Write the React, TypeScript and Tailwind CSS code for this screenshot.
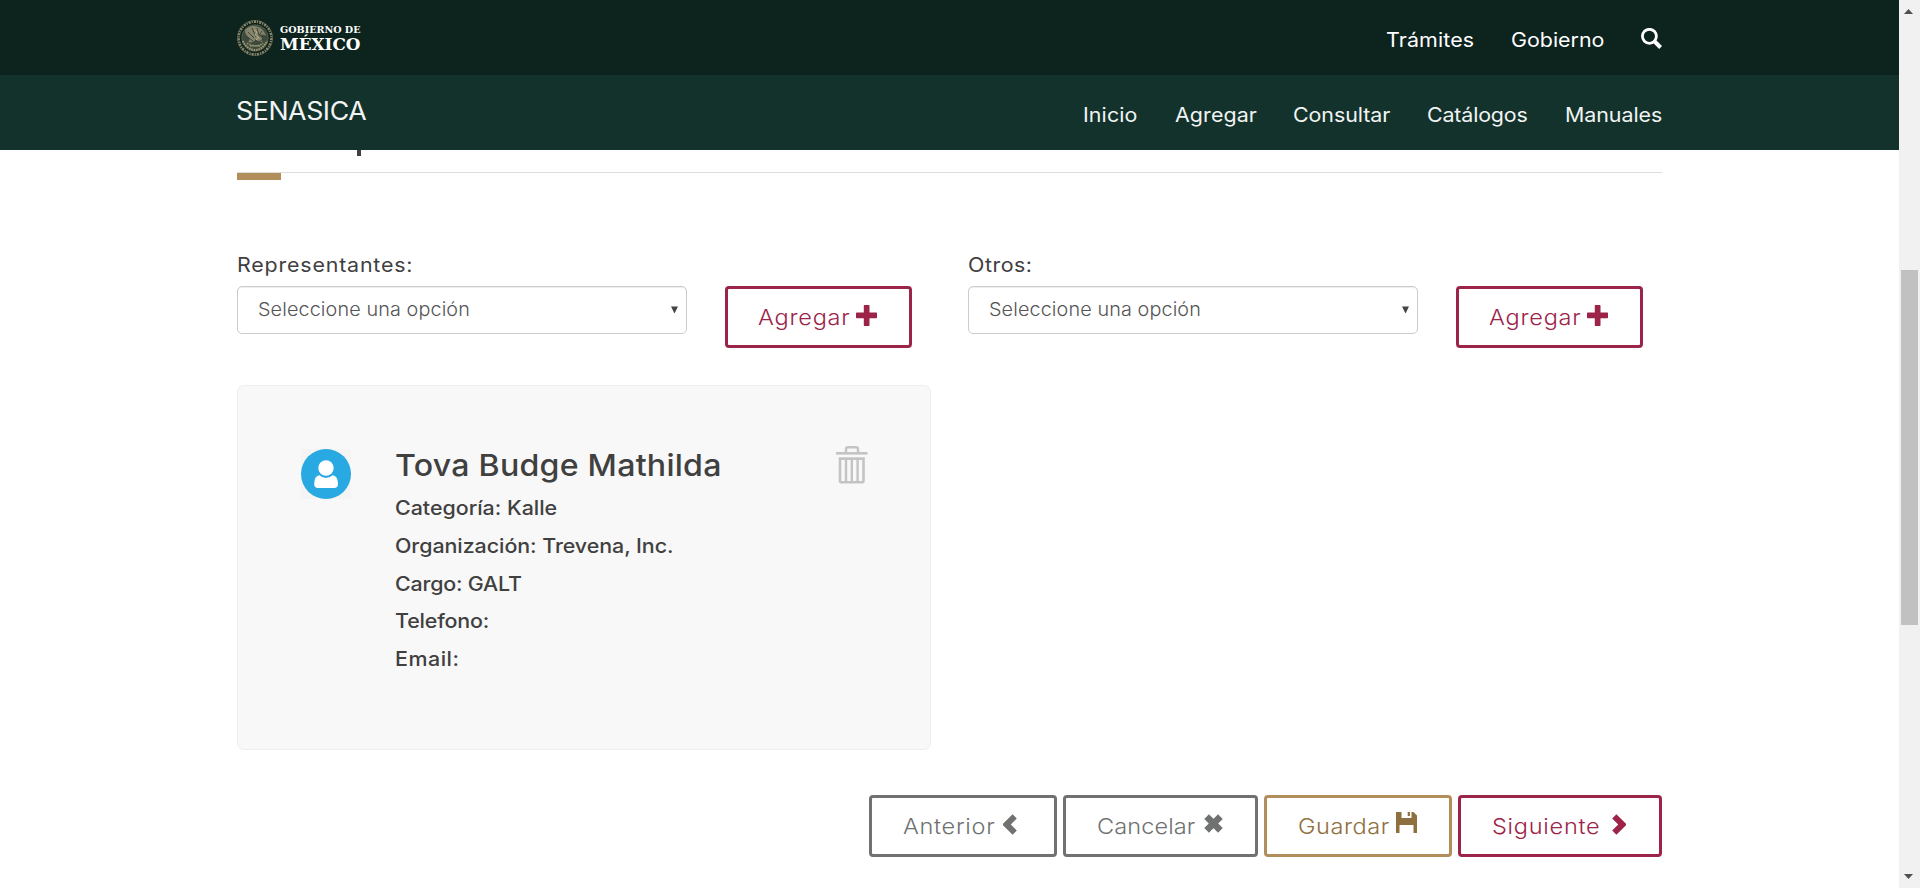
import type { ReactNode } from 'react';

function Emblem() {
  return (
    <svg width="36" height="36" viewBox="0 0 36 36" fill="none" className="shrink-0">
      <circle cx="18" cy="18" r="16.4" stroke="#8c8869" strokeWidth="2.6" strokeDasharray="2.2 0.9 1.2 1.1" />
      <circle cx="18" cy="18" r="17.6" stroke="#6f6f57" strokeWidth="0.6" />
      <circle cx="18" cy="18" r="13.3" fill="#3d4a3b" stroke="#686b53" strokeWidth="0.6" />
      <path d="M8 10c3-4 9-5 13-3 4 1 7 5 8 9-3-2-5-2-7 0 3 1 4 3 3 6-3 0-5-1-6-3-2 3-5 4-8 3 2-2 2-4 0-5-2-2-3-4-3-7z" fill="#85836a" />
      <path d="M11 12l6 6M15 8l4 9M20 8l2 7M25 11l-4 6M9 16l7 5M27 19l-6 3" stroke="#2b392f" strokeWidth="0.8" />
      <path d="M6 21c2 5 7 9 12 9s10-4 12-9" stroke="#a09a78" strokeWidth="2" strokeDasharray="1.6 0.8" />
      <path d="M10 23c3 3 13 4 16 0M13 26h10" stroke="#8f8c70" strokeWidth="1.4" strokeDasharray="2 0.7" />
      <path d="M17 10l3 2-2 3 4 2-3 3" stroke="#b4ad8b" strokeWidth="1" />
    </svg>
  );
}

function LogoText() {
  return (
    <svg width="82" height="30" viewBox="0 0 82 30" fill="#fff" fontFamily="'DejaVu Serif', serif" fontWeight="700">
      <text x="0" y="10" fontSize="9.8" textLength="80.5" lengthAdjust="spacingAndGlyphs">GOBIERNO DE</text>
      <text x="0" y="27" fontSize="16.2" textLength="80.5" lengthAdjust="spacingAndGlyphs">MÉXICO</text>
    </svg>
  );
}

function SearchIcon() {
  return (
    <svg width="21" height="21" viewBox="0 0 21 21" fill="none" stroke="#fff">
      <circle cx="8.4" cy="8.3" r="7" strokeWidth="2.8" />
      <path d="M12.6 12.5l7 7" strokeWidth="4" />
    </svg>
  );
}

function PlusIcon() {
  return (
    <svg width="21" height="21" viewBox="0 0 21 21" fill="currentColor">
      <path d="M8.5 0h4.3a.7.7 0 0 1 .7.7V7.500h6.800a.7.7 0 0 1 .7.7v4.300a.7.7 0 0 1-.7.7h-6.800v7.100a.7.7 0 0 1-.7.7H8.500a.7.7 0 0 1-.7-.7v-7.100H.7a.7.7 0 0 1-.7-.7V8.200A.7.7 0 0 1 .7 7.500h7.100V.7a.7.7 0 0 1 .7-.7z" />
    </svg>
  );
}

function ChevronLeft() {
  return (
    <svg width="14" height="21" viewBox="0 0 14 21" fill="currentColor">
      <path d="M9.6.3L13.8 4.500 7.800 10.500l6 6-4.200 4.200L0 11.200v-1.400z" />
    </svg>
  );
}

function ChevronRight() {
  return (
    <svg width="14" height="21" viewBox="0 0 14 21" fill="currentColor">
      <path d="M4.400.3L.2 4.500l6 6-6 6 4.200 4.200 9.600-9.500v-1.400z" />
    </svg>
  );
}

function RemoveIcon() {
  return (
    <svg width="19" height="19" viewBox="0 0 19 19" stroke="currentColor" strokeWidth="6.6" fill="none">
      <path d="M2.600 2.600l13.800 13.800M16.400 2.600L2.600 16.400" />
    </svg>
  );
}

function SaveIcon() {
  return (
    <svg width="21" height="21" viewBox="0 0 21 21" fill="currentColor">
      <path d="M0 0h5.500v6h10V0h2L21 3.500V21h-3.500v-8H3.500v8H0z" />
      <path d="M11.700 0h2.200v4h-2.200z" />
    </svg>
  );
}

function TrashIcon() {
  return (
    <svg width="32" height="38" viewBox="0 0 32 38" fill="none" stroke="#c4c4c4" strokeWidth="2">
      <path d="M0 7.300h31.500" strokeWidth="2.600" />
      <path d="M10 7V3.200Q10 1.200 12 1.200h8q2 0 2 2V7" strokeWidth="2.400" />
      <path d="M4 12.600h23.500v22.200q0 1.500-1.500 1.500H5.500q-1.500 0-1.500-1.500z" strokeWidth="2.600" />
      <path d="M10 13v23M15.800 13v23M21.600 13v23" strokeWidth="2.400" />
    </svg>
  );
}

function Avatar() {
  return (
    <div className="flex size-[50px] shrink-0 bg-[#f4f4f4]">
      <svg width="50" height="50" viewBox="0 0 50 50">
        <circle cx="25" cy="25" r="25" fill="#29a9e1" />
        <path
          d="M18.500 26.200q3 2.900 6.500 2.900t6.500-2.900q5.500.6 5.500 8.800 0 4-3.800 4H17q-3.800 0-3.800-4 0-8.200 5.300-8.800z"
          fill="#fff"
        />
        <circle cx="25" cy="19" r="7.700" fill="#fff" />
      </svg>
    </div>
  );
}

function Wide({ className = '', children }: { className?: string; children: ReactNode }) {
  return (
    <span className={`inline-block origin-left scale-x-[1.07] whitespace-nowrap ${className}`}>{children}</span>
  );
}

function SelectBox() {
  return (
    <div className="flex h-12 w-[450px] items-center justify-between rounded-[5px] border border-[#ccc] bg-white pr-[8px] pl-[20px] shadow-[inset_0_1px_1px_rgba(0,0,0,0.075)]">
      <Wide className="text-[18.5px] font-light tracking-[0.1px] text-[#555]">Seleccione una opción</Wide>
      <svg width="7" height="8" viewBox="0 0 7 8" fill="#444">
        <path d="M0 .5h7L3.500 7.500z" />
      </svg>
    </div>
  );
}

function Button({ className, children }: { className: string; children: ReactNode }) {
  return (
    <button
      type="button"
      className={`flex h-[62px] items-center rounded-[4px] border-3 bg-white text-[22px] font-light ${className}`}
    >
      {children}
    </button>
  );
}

function Field({ label, className }: { label: string; className: string }) {
  return (
    <div className="flex w-[731px] shrink-0 items-end">
      <div className="h-[98px] w-[488px]">
        <div className="flex h-[36px] items-center pb-[7px] text-[20px] text-[#404041]">
          <Wide className={className}>{label}</Wide>
        </div>
        <SelectBox />
      </div>
      <Button className="w-[187px] border-[#9d2449] pl-[30px] text-[#9d2449]">
        <span className="w-[98px] pt-[1px] text-left"><Wide className="tracking-[0.7px]">Agregar</Wide></span>
        <span className="pb-[4px]"><PlusIcon /></span>
      </Button>
    </div>
  );
}

export default function App() {
  return (
    <div className="flex h-[888px] w-[1920px] overflow-hidden bg-white font-['Inter',sans-serif]">
      <div className="w-[1899px]">
        <header className="text-white">
          <div className="flex h-[75px] justify-between bg-[#0c231e] pr-[237px] pl-[237px]">
            <div className="flex items-center gap-[7px]">
              <Emblem />
              <LogoText />
            </div>
            <nav className="flex items-center pt-[5px] text-[20px]">
              <a className="w-[125px]"><Wide className="tracking-[0.12px]">Trámites</Wide></a>
              <a className="w-[130px]"><Wide>Gobierno</Wide></a>
              <a className="pb-[4px]"><SearchIcon /></a>
            </nav>
          </div>
          <div className="flex h-[75px] justify-between bg-[#13322b] pr-[237px] pl-[236px] text-[#f1f4f3]">
            <div className="flex items-center pb-[2px] text-[25px]">
              <Wide className="tracking-[-0.4px]">SENASICA</Wide>
            </div>
            <nav className="flex items-center pt-[5px] text-[20px]">
              <a className="w-[92px]"><Wide className="tracking-[0.1px]">Inicio</Wide></a>
              <a className="w-[118px]"><Wide className="tracking-[0.1px]">Agregar</Wide></a>
              <a className="w-[134px]"><Wide className="tracking-[-0.05px]">Consultar</Wide></a>
              <a className="w-[138px]"><Wide className="tracking-[-0.15px]">Catálogos</Wide></a>
              <a className="w-[97px]"><Wide className="tracking-[-0.05px]">Manuales</Wide></a>
            </nav>
          </div>
        </header>

        <main className="pr-[237px] pl-[237px]">
          <div className="h-[23px] border-b border-[#ddd] pl-[120px]">
            <div className="h-[6px] w-[4px] bg-[#404041]" />
          </div>
          <div className="h-[7px] w-11 bg-[#b38e5d]" />

          <section className="flex pt-[70px]">
            <Field label="Representantes:" className="tracking-[0.76px]" />
            <Field label="Otros:" className="tracking-[0.5px]" />
          </section>

          <article className="mt-[37px] flex h-[365px] w-[694px] rounded-[7px] border border-[#eee] bg-[#f8f8f8] pt-[60px] pl-[63px]">
            <div className="w-[94px] pt-[3px]">
              <Avatar />
            </div>
            <div className="w-[441px] text-[20px] font-medium text-[#404041]">
              <h3 className="flex h-[40px] items-center pb-[1px] text-[30px]"><Wide className="tracking-[0.24px]">Tova Budge Mathilda</Wide></h3>
              <p className="flex h-[38px] items-center pt-[5px]"><Wide>Categoría: Kalle</Wide></p>
              <p className="flex h-[38px] items-center pt-[5px]"><Wide className="tracking-[-0.04px]">Organización: Trevena, Inc.</Wide></p>
              <p className="flex h-[38px] items-center pt-[5px]"><Wide className="tracking-[-0.18px]">Cargo: GALT</Wide></p>
              <p className="flex h-[37px] items-center pt-[5px]"><Wide className="tracking-[-0.15px]">Telefono:</Wide></p>
              <p className="flex h-[38px] items-center pt-[5px]"><Wide className="tracking-[0.5px]">Email:</Wide></p>
            </div>
            <TrashIcon />
          </article>

          <div className="mt-[45px] flex justify-end gap-[6px]">
            <Button className="w-[188px] border-[#6f7271] pl-[31px] text-[#6f7271]">
              <span className="w-[100px] pt-[1px] text-left"><Wide className="tracking-[0.65px]">Anterior</Wide></span>
              <span className="pb-[3px]"><ChevronLeft /></span>
            </Button>
            <Button className="w-[195px] border-[#6f7271] pl-[31px] text-[#6f7271]">
              <span className="w-[107px] pt-[1px] text-left"><Wide className="tracking-[0.08px]">Cancelar</Wide></span>
              <span className="pb-[5px]"><RemoveIcon /></span>
            </Button>
            <Button className="w-[188px] border-[#b38e5d] pl-[31px] text-[#8e6f3e]">
              <span className="w-[98px] pt-[1px] text-left"><Wide className="tracking-[0.5px]">Guardar</Wide></span>
              <span className="pb-[7px]"><SaveIcon /></span>
            </Button>
            <Button className="w-[204px] border-[#9d2449] pl-[31px] text-[#9d2449]">
              <span className="w-[120px] pt-[1px] text-left"><Wide className="tracking-[0.68px]">Siguiente</Wide></span>
              <span className="pb-[3px]"><ChevronRight /></span>
            </Button>
          </div>
        </main>
      </div>

      <aside className="flex w-[21px] flex-col items-center justify-between bg-[#f1f1f1] pt-[9px] pr-[3px] pb-[9px]">
        <svg width="9" height="5" viewBox="0 0 9 5" fill="#505050"><path d="M0 5l4.500-5L9 5z" /></svg>
        <div className="mb-[-7px] h-[355px] w-[17px] translate-x-[1px] bg-[#c1c1c1]" />
        <svg width="9" height="5" viewBox="0 0 9 5" fill="#505050"><path d="M0 0l4.500 5L9 0z" /></svg>
      </aside>
    </div>
  );
}
